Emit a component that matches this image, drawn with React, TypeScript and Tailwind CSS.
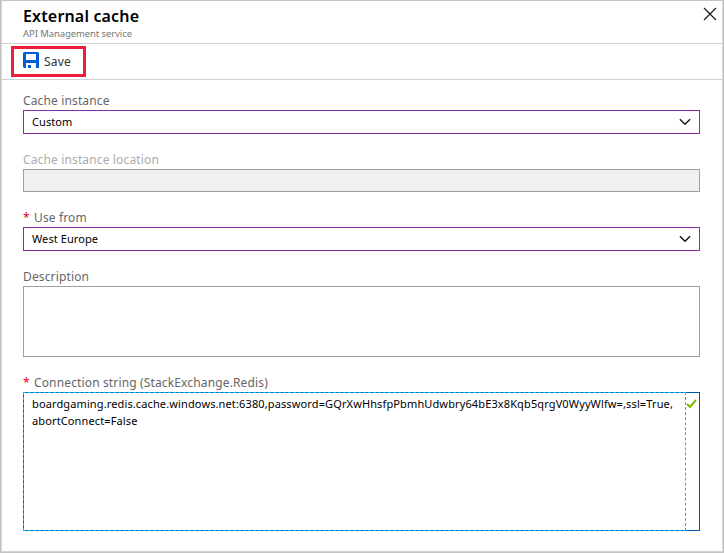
import React from "react";

function Chevron() {
  return (
    <svg width="12" height="8" viewBox="0 0 12 8" className="mr-[8px] shrink-0" fill="none" stroke="#1a1a1a" strokeWidth="1.5">
      <path d="M0.9 1.2 L6 6.2 L11.1 1.2" />
    </svg>
  );
}

function SaveIcon() {
  return (
    <svg width="16" height="16" viewBox="0 0 16 16" className="shrink-0">
      <path fill="#015cda" fillRule="evenodd" d="M1 0H15L16 1V15.5L15.5 16H13V11H3V16H1.2L0 14.8V1Z M3 2V8H13V2Z" />
      <path fill="#015cda" d="M5 13H8V16H5Z" />
    </svg>
  );
}

function Label({ text, required, muted }: { text: string; required?: boolean; muted?: boolean }) {
  return (
    <div className={`flex h-[18px] items-center text-[12px] leading-[18px] tracking-[0.14px] whitespace-nowrap ${muted ? "text-[#acacac]" : "text-[#666666]"}`}>
      {required && <span className="w-[11px] font-medium text-[#e81123]">*</span>}
      <span>{text}</span>
    </div>
  );
}

function Select({ value }: { value: string }) {
  return (
    <div className="flex h-6 items-center justify-between border border-[#892a9f] bg-white pl-2">
      <span className="text-[11px] leading-4 tracking-[0.09px] text-black">{value}</span>
      <Chevron />
    </div>
  );
}

export default function App() {
  return (
    <div className="flex h-[553px] w-[724px] flex-col border border-[#c3c3c3] bg-white font-['Noto_Sans',sans-serif]">
      <div className="flex grow flex-col border border-t-0 border-[#d4d4d4]">
        <header className="flex h-[43px] shrink-0 justify-between border-b border-[#d0d0d0] pr-[5px] pl-[21px]">
          <div className="whitespace-nowrap">
            <h1 className="mt-[3px] text-[16px] leading-[24px] font-semibold tracking-[0.16px] text-black">External cache</h1>
            <p className="text-[9.5px] leading-[12px] tracking-[-0.09px] text-[#777777]">API Management service</p>
          </div>
          <svg width="14" height="14" viewBox="0 0 14 14" className="mt-[6px]" stroke="#1a1a1a" strokeWidth="1.2">
            <path d="M1 1 L13 13 M13 1 L1 13" />
          </svg>
        </header>
        <div className="flex h-[36px] shrink-0 items-start border-b border-[#d0d0d0] pt-[2px] pl-[9px]">
          <button className="flex h-[31px] w-[75px] items-start border-[3px] border-[#f01c3c] pt-[3px] pl-[9px]">
            <SaveIcon />
            <span className="mt-[2px] ml-[5px] text-[12px] leading-4 tracking-[0.2px] text-[#333333]">Save</span>
          </button>
        </div>
        <main className="flex flex-col pt-[12px] pr-[22px] pl-[21px]">
          <Label text="Cache instance" />
          <Select value="Custom" />
          <div className="mt-[17px]"><Label text="Cache instance location" muted /></div>
          <div className="h-[23px] border border-[#a0a0a0] bg-[#f0f0f0]" />
          <div className="mt-[17px]"><Label text="Use from" required /></div>
          <Select value="West Europe" />
          <div className="mt-[17px]"><Label text="Description" /></div>
          <div className="h-[71px] border border-[#a0a0a0]" />
          <div className="mt-[17px]"><Label text="Connection string (StackExchange.Redis)" required /></div>
          <div className="flex h-[139px] border border-[#0058ad]">
            <div className="-my-px -ml-px w-[663px] shrink-0 border border-dashed border-[#00bcf2] pt-[2px] pl-2 text-[11px] leading-[17px] tracking-[0.125px] whitespace-nowrap text-black">
              <p>boardgaming.redis.cache.windows.net:6380,password=GQrXwHhsfpPbmhUdwbry64bE3x8Kqb5qrgV0WyyWlfw=,ssl=True,</p>
              <p>abortConnect=False</p>
            </div>
            <div className="grow pt-[6px]">
              <svg width="11" height="10" viewBox="0 0 11 10" fill="none" stroke="#7fba00" strokeWidth="2">
                <path d="M1 5 L4 8 L10 1" />
              </svg>
            </div>
          </div>
        </main>
      </div>
    </div>
  );
}
